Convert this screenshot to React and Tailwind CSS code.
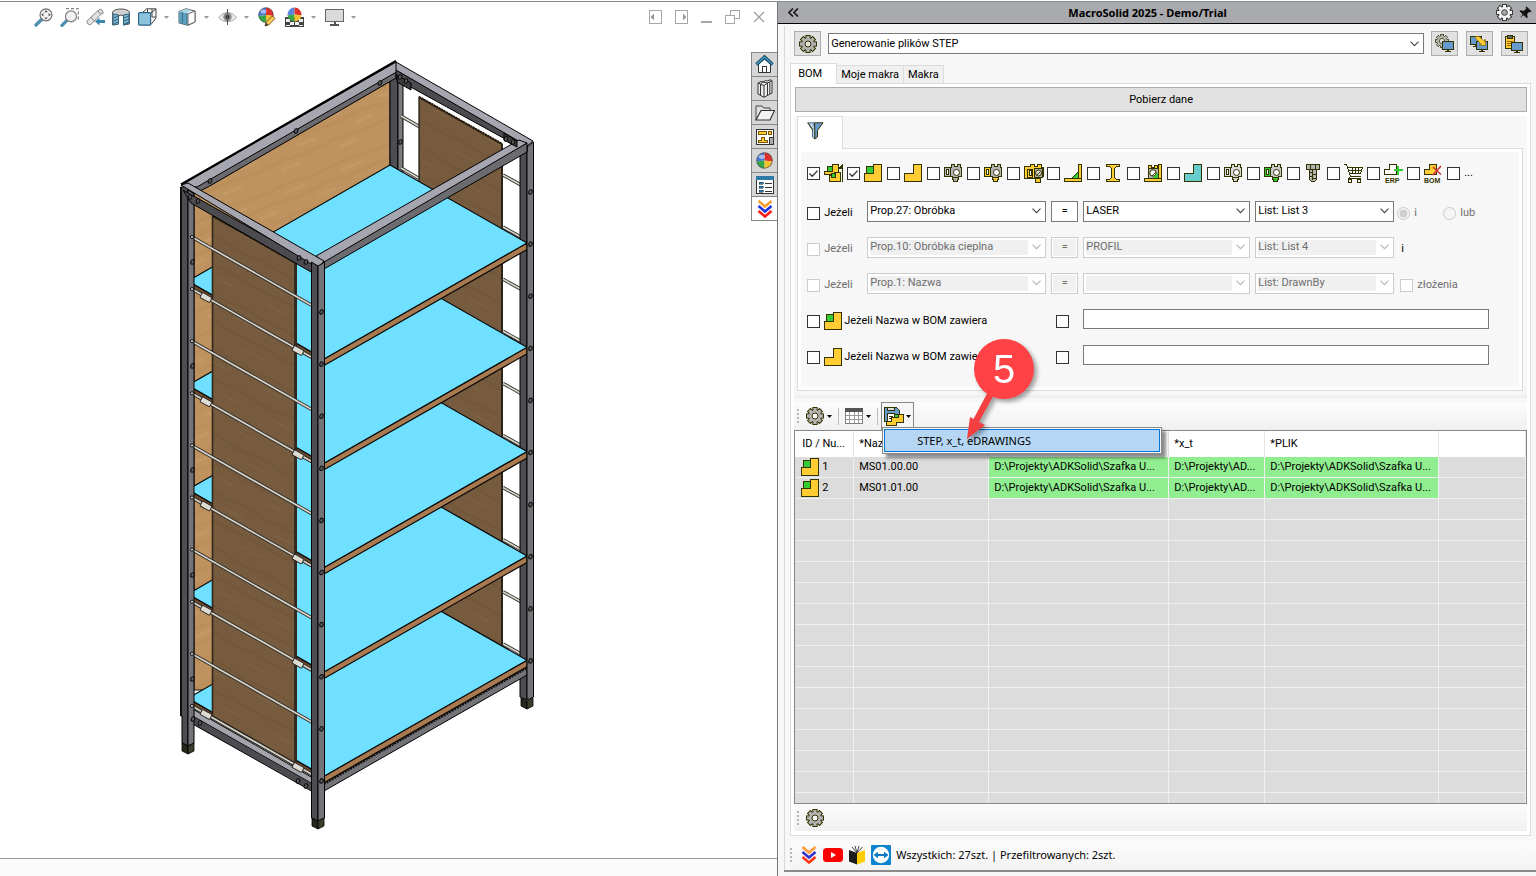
import React, { useState } from 'react';

const INK = '#333300';
const YELLOW = '#ffcc33';
const CYAN = '#6fe0ff';

/* ---------- small shared icons ---------- */

const GEAR_ANGLES = [0, 45, 90, 135, 180, 225, 270, 315];

const GearIcon = ({ size = 18, fill = '#b3b3b3', stroke = INK, hole = '#f7f7f7' }) => (
    <svg width={size} height={size} viewBox="0 0 18 18" className="shrink-0">
        {GEAR_ANGLES.map((a) => (
            <rect key={a} x="6.4" y="0" width="5.2" height="5" fill={stroke} transform={`rotate(${a} 9 9)`} />
        ))}
        <circle cx="9" cy="9" r="6.9" fill={stroke} />
        {GEAR_ANGLES.map((a) => (
            <rect key={a} x="7.4" y="1" width="3.2" height="5" fill={fill} transform={`rotate(${a} 9 9)`} />
        ))}
        <circle cx="9" cy="9" r="6" fill={fill} />
        <circle cx="9" cy="9" r="3" fill={hole} stroke={stroke} />
    </svg>
);

const Icon = ({ w = 18, h = 18, crisp = true, children }) => (
    <svg
        width={w}
        height={h}
        viewBox={`0 0 ${w} ${h}`}
        className="shrink-0"
        fill="none"
        shapeRendering={crisp ? 'crispEdges' : 'auto'}
    >
        {children}
    </svg>
);

const PartIcon = () => (
    <Icon>
        <path d="M9.5 .5H17.5V17.5H.5V9.5H9.5Z" fill={YELLOW} stroke={INK} />
        <rect x="2.5" y="2.5" width="7" height="7" fill="#33cc33" stroke={INK} />
    </Icon>
);

const SheetIcon = ({ fill = YELLOW }) => (
    <Icon>
        <path d="M9.5 .5H17.5V17.5H.5V9.5H9.5Z" fill={fill} stroke={INK} />
    </Icon>
);

const AssemblyIcon = () => (
    <Icon w={20}>
        <path d="M8.5 .5H14.5V10.5H.5V7.5H3.5V3.5H8.5Z" fill={YELLOW} stroke={INK} />
        <path d="M10.5 8.5H16.5V17.5H5.5V11.5H10.5Z" fill={YELLOW} stroke={INK} />
        <rect x="3.5" y="2.5" width="5" height="5" fill="#33cc33" stroke={INK} />
        <rect x="7.5" y="9.5" width="4" height="4" fill="#33cc33" stroke={INK} />
        <path d="M18.5 0V18M17.5 1V5M16.5 2V5M15.5 3V5" stroke={INK} />
    </Icon>
);

const HolderIcon = ({ body = '#b3b3b3', side, foot }) => (
    <Icon>
        <path d="M5.5 3.5H7.5V.5H10.5V2.5H13.5V.5H16.5V3.5H17.5V12.5H14.5V13.5H8.5V12.5H5.5Z" fill={body} stroke={INK} />
        <rect x=".5" y="3.5" width="6" height="9" fill={side || body} stroke={INK} />
        <rect x="2.5" y="5.5" width="2" height="5" fill="#fff" stroke={INK} />
        <path d="M8.5 13.5H14.5V15.5H13.5V17.5H9.5V15.5H8.5Z" fill={foot || body} stroke={INK} />
        <circle cx="12.5" cy="8.5" r="3" fill="#fff" stroke={INK} shapeRendering="auto" />
    </Icon>
);

const MultiHolderIcon = () => (
    <Icon w={20} h={19}>
        <path d="M.5 2.5H6.5V.5H10.5V2.5H13.5V.5H17.5V3.5H19.5V12.5H16.5V14.5H.5Z" fill={YELLOW} stroke={INK} />
        <rect x="3.5" y="5.5" width="5" height="8" fill={YELLOW} stroke={INK} />
        <path d="M10.5 4.5H18.5V13.5H10.5Z" fill="#b3b3b3" stroke={INK} />
        <rect x="5.5" y="6.5" width="2" height="5" fill="#fff" stroke={INK} />
        <path d="M11.5 14.5H16.5V18.5H11.5Z" fill={YELLOW} stroke={INK} />
        <circle cx="14.5" cy="9" r="3" fill="#ddd" stroke={INK} shapeRendering="auto" />
        <path d="M13 11L16 8" stroke={INK} />
    </Icon>
);

const WeldIcon = () => (
    <Icon>
        <path d="M7.5 14.5L14.5 7.5V14.5Z" fill="#33cc33" stroke={INK} />
        <rect x="14.5" y=".5" width="3" height="14" fill={YELLOW} stroke={INK} />
        <rect x=".5" y="14.5" width="17" height="3" fill={YELLOW} stroke={INK} />
    </Icon>
);

const BeamIcon = () => (
    <Icon>
        <path d="M2.5 .5H15.5V2.5H12.5L10.5 4.5V13.5L12.5 15.5H15.5V17.5H2.5V15.5H5.5L7.5 13.5V4.5L5.5 2.5H2.5Z" fill={YELLOW} stroke={INK} />
    </Icon>
);

const WeldmentIcon = () => (
    <Icon>
        <rect x=".5" y="14.5" width="17" height="3" fill={YELLOW} stroke={INK} />
        <rect x="14.5" y=".5" width="3" height="14" fill={YELLOW} stroke={INK} />
        <path d="M4.5 1.5H7.5V3.5H10.5V1.5H13.5V4.5H4.5Z" fill={YELLOW} stroke={INK} />
        <rect x="4.5" y="4.5" width="10" height="10" fill="#b3b3b3" stroke={INK} />
        <circle cx="9" cy="9" r="3.2" fill="#fff" stroke={INK} shapeRendering="auto" />
        <path d="M8.5 14L14 8.5V14Z" fill="#33cc33" />
        <path d="M8 12L12 8" stroke={INK} />
    </Icon>
);

const BoltIcon = () => (
    <Icon>
        <path d="M5.5 5.5H12.5V15.5L10.5 17.5H7.5L5.5 15.5Z" fill="#b3b3b3" stroke={INK} />
        <rect x="2.5" y=".5" width="13" height="5" fill="#b3b3b3" stroke={INK} />
        <path d="M6.5 1V5M11.5 1V5M8.5 6V16M6 8.5H9M9 10.5H12M6 12.5H9M9 14.5H12" stroke={INK} />
    </Icon>
);

const CartIcon = () => (
    <Icon w={19} h={19}>
        <path d="M0 .5H2.5L6.5 12.5H16.5M3.5 3.5H18.5L16.5 9.5H5.5M4.5 6.5H17.5M8.5 3.5V9.5M11.5 3.5V9.5M14.5 3.5V9.5M6.5 12.5L4.5 14.5H16.5" stroke={INK} />
        <rect x="4.5" y="15.5" width="3" height="3" fill="#fff" stroke={INK} />
        <rect x="13.5" y="15.5" width="3" height="3" fill="#fff" stroke={INK} />
    </Icon>
);

const ErpIcon = () => (
    <Icon w={20} h={19}>
        <path d="M5.5 .5H12.5V10.5H.5V5.5H5.5Z" fill="#fff" stroke={INK} />
        <path d="M14 2V11M9.5 6H19" stroke="#33cc33" strokeWidth="2" />
        <text x="1" y="19" fontSize="7" fontWeight="700" fontFamily="Liberation Sans, sans-serif" fill={INK} shapeRendering="auto">ERP</text>
    </Icon>
);

const BomIcon = () => (
    <Icon w={20} h={19}>
        <path d="M5.5 .5H12.5V10.5H.5V5.5H5.5Z" fill={YELLOW} stroke={INK} />
        <path d="M9 3L17 10.5M17 2L9 11" stroke="#cc3333" strokeWidth="1.6" shapeRendering="auto" />
        <text x="0" y="19" fontSize="7" fontWeight="700" fontFamily="Liberation Sans, sans-serif" fill={INK} shapeRendering="auto">BOM</text>
    </Icon>
);

const Monitor = ({ x, y }) => (
    <g transform={`translate(${x} ${y})`}>
        <path d="M6 9V11M3 10.5H9" stroke={INK} strokeWidth="1.4" />
        <rect x=".5" y=".5" width="11" height="8" fill="#6699cc" stroke={INK} />
    </g>
);

const GearMonitorIcon = () => (
    <Icon w={19} h={19}>
        <g transform="scale(.78)" shapeRendering="auto">
            {GEAR_ANGLES.map((a) => (
                <rect key={a} x="7.2" y=".5" width="3.6" height="4" fill="#b3b3b3" stroke={INK} transform={`rotate(${a} 9 9)`} />
            ))}
            <circle cx="9" cy="9" r="5.2" fill="#e1e1e1" stroke="#b3b3b3" strokeWidth="2.4" />
            <circle cx="9" cy="9" r="3.4" stroke={INK} />
        </g>
        <Monitor x={7} y={7} />
    </Icon>
);

const MonitorsIcon = () => (
    <Icon w={19} h={18}>
        <Monitor x={0} y={1} />
        <Monitor x={6} y={6} />
        <g shapeRendering="auto">
            <path d="M5 1.5H9L14.5 6.5V4.5H15.5V10.5H9.5V9.500H11.5L6.500 4.500Z" fill={YELLOW} stroke="#806000" strokeWidth=".6" />
        </g>
    </Icon>
);

const ClipMonitorIcon = () => (
    <Icon w={19} h={18}>
        <rect x=".5" y="1.5" width="9" height="12" fill={YELLOW} stroke={INK} />
        <rect x="2.5" y=".5" width="5" height="3" fill="#666" stroke={INK} />
        <path d="M2 6.5H8M2 8.5H8M2 10.5H8" stroke="#996600" />
        <Monitor x={6} y={7} />
    </Icon>
);

const FilterIcon = () => (
    <Icon w={17} h={18} crisp={false}>
        <path d="M.8.8H6.5L8 8V17L5.5 15V8Z" fill="#b9d3ea" stroke="#4d6b88" />
        <path d="M7.5.8H16L10.5 8.5V15L7.8 17V8.5Z" fill="#6699cc" stroke={INK} />
        <path d="M.8.8L6 8" stroke={INK} />
    </Icon>
);

const GridIcon = () => (
    <Icon w={18} h={16}>
        <rect x=".5" y=".5" width="17" height="15" fill="#fff" stroke="#808080" />
        <rect x="0" y="0" width="18" height="4" fill="#555" />
        <path d="M4.5 4V15M9.5 4V15M13.5 4V15M1 7.5H17M1 11.5H17" stroke="#999" />
    </Icon>
);

const SaveStepIcon = () => (
    <Icon w={20} h={19}>
        <path d="M.5 .5H12.5L15.5 3.5V14.5H.5Z" fill="#6699cc" stroke={INK} />
        <rect x="3.5" y=".5" width="7" height="3" fill="#ddd" stroke={INK} />
        <rect x="3.5" y="6.5" width="7" height="8" fill="#fff" stroke={INK} />
        <path d="M5 9.5H9M5 11.5H9" stroke={INK} />
        <path d="M14.5 7.5H19.5V15.5H12.5V18.5H2.5V14.5H7.5V10.5H14.5Z" fill={YELLOW} stroke={INK} />
        <rect x="10.5" y="7.5" width="4" height="3" fill="#33cc33" stroke={INK} />
    </Icon>
);

const Chevrons = ({ colors = ['#f9a02c', '#2233dd', '#ff1a1a'] }) => (
    <svg width="16" height="18" viewBox="0 0 16 18" fill="none" strokeWidth="2.6" className="shrink-0">
        <path d="M1.5 1L8 6.5L14.5 1" stroke={colors[0]} />
        <path d="M1.5 6L8 11.5L14.5 6" stroke={colors[1]} />
        <path d="M1.5 11L8 16.5L14.5 11" stroke={colors[2]} />
    </svg>
);

const Caret = ({ color = '#000' }) => (
    <svg width="5" height="3" viewBox="0 0 5 3" className="shrink-0">
        <path d="M0 0H5L2.5 3Z" fill={color} />
    </svg>
);

const BallIcon = ({ size = 16 }) => (
    <svg width={size} height={size} viewBox="0 0 16 16" className="shrink-0">
        <path d="M8 8V.5A7.5 7.5 0 0 0 .6 9Z" fill="#4a78d8" />
        <path d="M8 8V.5A7.5 7.5 0 0 1 15.4 9Z" fill="#e0302c" />
        <path d="M8 8L.6 9A7.5 7.5 0 0 0 8 15.5Z" fill="#35a845" />
        <path d="M8 8L15.4 9A7.5 7.5 0 0 1 8 15.5Z" fill="#f2c230" />
        <circle cx="8" cy="8" r="7.3" fill="none" stroke="#444" strokeOpacity=".6" />
        <ellipse cx="5.5" cy="4.5" rx="3" ry="2" fill="#fff" opacity=".5" />
    </svg>
);

/* ---------- graphics area toolbar ---------- */

const ZoomFitIcon = () => (
    <Icon w={19} h={19} crisp={false}>
        <path d="M2 17L8 11" stroke="#4f8fb0" strokeWidth="3.4" strokeLinecap="round" />
        <circle cx="12" cy="6.8" r="6" fill="#f4f4f4" stroke="#707070" strokeWidth="1.2" />
        <path d="M12 2L13.8 4.2H10.2ZM12 11.6L13.8 9.4H10.2ZM7.2 6.8L9.4 5V8.6ZM16.8 6.8L14.6 5V8.6Z" fill="#555" />
    </Icon>
);

const ZoomAreaIcon = () => (
    <Icon w={19} h={19} crisp={false}>
        <path d="M6 .7H18.3V13" stroke="#666" strokeDasharray="3 2" />
        <path d="M2 17.4L7 12.4" stroke="#4f8fb0" strokeWidth="3.4" strokeLinecap="round" />
        <circle cx="11" cy="8.4" r="5.5" fill="#f1f1f1" stroke="#808080" strokeWidth="1.2" />
    </Icon>
);

const PrevViewIcon = () => (
    <Icon w={19} h={18} crisp={false}>
        <path d="M1 13L12 2.5L15 1L17.5 5L14.5 6.5L5 16.5C2.5 17 .5 15.5 1 13Z" fill="#e2e2e2" stroke="#888" />
        <path d="M5 9L8.5 13.5M12 2.8L14.8 6.5" stroke="#888" />
        <path d="M9 13.5L13.5 9.5V12H19V15H13.5V17.5Z" fill="#3f86ad" />
    </Icon>
);

const SectionIcon = () => (
    <Icon w={18} h={18} crisp={false}>
        <path d="M.6 4C2 0 16 0 17.4 4V16L11.5 17V8L9 7L6.5 8V16L.6 17Z" fill="#cfcfcf" stroke="#555" />
        <path d="M1 6L6.5 7V16L1 17ZM11.5 7L17 6V15L11.5 17Z" fill="#7db8d4" stroke="#33627c" />
        <path d="M1.5 10L6 8M1.5 13L6 11M1.5 16L6 14M12 10L17 8M12 13L17 11M12 16L17 14" stroke="#33627c" />
    </Icon>
);

const OrientationIcon = () => (
    <Icon w={19} h={18} crisp={false}>
        <path d="M4.5 4.5L8.5 .8H18V10L13 16.5" fill="#fafafa" stroke="#444" />
        <path d="M9.5 1V5M14 1V9H18M13 5L18 1" stroke="#444" />
        <rect x=".6" y="4.6" width="12" height="12.6" rx="1" fill="#8cc3dc" stroke="#2f6484" strokeWidth="1.2" />
    </Icon>
);

const DisplayStyleIcon = () => (
    <Icon w={18} h={18} crisp={false}>
        <path d="M1 3.5L8 .7L17 3V14L10 17.3L1 15Z" fill="#e7f0f4" stroke="#555" />
        <path d="M1 3.5L9 5V17L1 15Z" fill="#5d9fbe" />
        <path d="M1 3.5L8 .7L13 2L9 5Z" fill="#a9d3e4" />
        <path d="M10 6V17L17 14V3Z" fill="#fff" stroke="#666" />
        <path d="M9 5V17M4.500 4V16" stroke="#33627c" strokeWidth=".8" />
    </Icon>
);

const EyeIcon = () => (
    <Icon w={19} h={16} crisp={false}>
        <path d="M.5 8.5C5 2 14 2 18.5 8.5C14 14 5 14 .5 8.5Z" fill="#e9e9e9" stroke="#aaa" />
        <circle cx="9.5" cy="8" r="4.2" fill="#8a8a8a" />
        <circle cx="9.5" cy="8" r="2" fill="#333" />
        <path d="M9.5 0V16" stroke="#555" />
    </Icon>
);

const AppearanceIcon = () => (
    <div className="relative size-5">
        <BallIcon />
        <svg width="12" height="12" viewBox="0 0 12 12" className="absolute right-0 bottom-0">
            <path d="M1 11L2 7.5L8.5 1L11 3.5L4.5 10Z" fill="#ffd55c" stroke="#7a4a10" />
            <path d="M1 11L2 7.5L4.5 10Z" fill="#444" />
        </svg>
    </div>
);

const SceneIcon = () => (
    <svg width="19" height="20" viewBox="0 0 19 20" className="shrink-0">
        <rect x="0" y="10" width="19" height="10" fill="#444" />
        <path d="M1 12H5V15H1ZM14 12H18V15H14ZM5 15H9V18H5ZM10 15H14V18H10ZM1 18H5V19H1ZM14 18H18V19H14Z" fill="#eee" />
        <svg x="2" y="0" width="15" height="15" viewBox="0 0 16 16">
            <path d="M8 8V.5A7.5 7.5 0 0 0 .6 9Z" fill="#5a86e0" />
            <path d="M8 8V.5A7.5 7.5 0 0 1 15.4 9Z" fill="#e0302c" />
            <path d="M8 8L.6 9A7.5 7.5 0 0 0 8 15.5Z" fill="#35a845" />
            <path d="M8 8L15.4 9A7.5 7.5 0 0 1 8 15.5Z" fill="#f2c230" />
        </svg>
    </svg>
);

const DisplayIcon = () => (
    <Icon w={19} h={17}>
        <rect x=".5" y=".5" width="18" height="12" fill="#dadada" stroke="#666" />
        <path d="M9.5 13V16M5 16H14" stroke="#555" strokeWidth="2" />
    </Icon>
);

const ViewButton = ({ label, caret, children }) => (
    <button type="button" aria-label={label} className="flex h-5 items-center gap-2">
        <span className="flex w-[18px] justify-center">{children}</span>
        {caret && <Caret color="#999" />}
    </button>
);

const ViewportToolbar = () => (
    <div className="flex h-[30px] items-center pr-3 pl-[34px]">
        <div className="flex items-center gap-2">
            <ViewButton label="Zoom to fit"><ZoomFitIcon /></ViewButton>
            <ViewButton label="Zoom to area"><ZoomAreaIcon /></ViewButton>
            <ViewButton label="Previous view"><PrevViewIcon /></ViewButton>
            <ViewButton label="Section view"><SectionIcon /></ViewButton>
            <div className="flex items-center gap-[9px]">
                <ViewButton label="View orientation" caret><OrientationIcon /></ViewButton>
                <ViewButton label="Display style" caret><DisplayStyleIcon /></ViewButton>
                <ViewButton label="Hide or show items" caret><EyeIcon /></ViewButton>
                <ViewButton label="Edit appearance"><AppearanceIcon /></ViewButton>
                <ViewButton label="Apply scene" caret><SceneIcon /></ViewButton>
                <ViewButton label="View settings" caret><DisplayIcon /></ViewButton>
            </div>
        </div>
        <div className="ml-auto flex items-center gap-[13px]">
            <button type="button" aria-label="Collapse left">
                <Icon w={13} h={14}><rect x=".5" y=".5" width="12" height="13" stroke="#a6a6a6" /><path d="M1 7L5 4V10Z" fill="#999" /></Icon>
            </button>
            <button type="button" aria-label="Collapse right">
                <Icon w={13} h={14}><rect x=".5" y=".5" width="12" height="13" stroke="#a6a6a6" /><path d="M12 7L8 4V10Z" fill="#999" /></Icon>
            </button>
            <button type="button" aria-label="Minimize">
                <Icon w={11} h={14}><path d="M0 12H11" stroke="#a6a6a6" strokeWidth="2" /></Icon>
            </button>
            <button type="button" aria-label="Restore">
                <Icon w={15} h={14}><path d="M5.5 5V.5H14.5V8.5H10" stroke="#a6a6a6" /><rect x=".5" y="5.5" width="9" height="8" stroke="#a6a6a6" /></Icon>
            </button>
            <button type="button" aria-label="Close">
                <Icon w={12} h={14} crisp={false}><path d="M1 2L11 12M11 2L1 12" stroke="#a0a0a0" strokeWidth="1.4" /></Icon>
            </button>
        </div>
    </div>
);

/* ---------- task pane tabs ---------- */

const HomeIcon = () => (
    <Icon w={19} h={19} crisp={false}>
        <path d="M3.5 9V17.5H15.5V9L9.5 4Z" fill="#fff" stroke="#333" />
        <rect x="7.5" y="11.5" width="4" height="6" fill="#fff" stroke="#333" />
        <path d="M1.5 9.5L9.5 2L17.5 9.5" stroke="#123c52" strokeWidth="3.4" />
        <path d="M1.5 9.5L9.5 2L17.5 9.5" stroke="#3f9cc9" strokeWidth="1.6" />
    </Icon>
);

const LibraryIcon = () => (
    <Icon w={16} h={19} crisp={false}>
        <path d="M1 4L4 2.500L6 3L8.500 1.500L10.500 2L13 .8L15 1.500V14L7 18.300L1 15Z" fill="#ececec" stroke="#333" />
        <path d="M1 4L3.500 5V16.300M3.500 5L6 3M4 5.500L7 6.500V18M7 6.500L10.500 4V16M6 3L10.500 4L15 1.500M12.800 3V15" stroke="#333" />
    </Icon>
);

const FolderIcon = () => (
    <Icon w={20} h={17} crisp={false}>
        <path d="M1 16V2H7L8.5 4H15V7" fill="#e2e2e2" stroke="#444" />
        <path d="M1 16L6 6.5H19.5L15 16Z" fill="#f3f3f3" stroke="#333" strokeWidth="1.2" />
    </Icon>
);

const PaletteIcon = () => (
    <Icon w={18} h={16}>
        <rect x=".5" y=".5" width="17" height="15" fill="#fff" stroke="#333" />
        <path d="M2.5 2.5H10.5V5.5H2.5ZM12.5 2.5H15.5V5.5H12.5ZM5.5 8.5H8.5V11.5H11.5V13.5H2.5V11.5H5.5Z" fill={YELLOW} stroke="#7a5200" />
        <path d="M13 8H17V15H13Z" fill="#aaa" stroke="#333" />
    </Icon>
);

const PropsIcon = () => (
    <Icon w={18} h={18}>
        <rect x=".5" y=".5" width="17" height="17" fill="#fff" stroke="#333" />
        <rect x="0" y="0" width="18" height="4" fill="#2d7ba6" />
        <path d="M3 6H7V8H3ZM3 10H7V12H3ZM3 14H7V16H3Z" fill="#2d7ba6" stroke="#1d3f55" strokeWidth=".6" />
        <path d="M9 7.5H16M9 11.5H16M9 15.5H16" stroke="#333" />
    </Icon>
);

const paneTabs = [
    { label: 'Home', icon: <HomeIcon /> },
    { label: 'Design library', icon: <LibraryIcon /> },
    { label: 'File explorer', icon: <FolderIcon /> },
    { label: 'View palette', icon: <PaletteIcon /> },
    { label: 'Appearances', icon: <BallIcon size={17} /> },
    { label: 'Custom properties', icon: <PropsIcon /> },
    { label: 'MacroSolid', icon: <Chevrons />, active: true },
];

const PaneTabs = () => (
    <nav className="mt-5 flex w-[26px] shrink-0 flex-col self-start border-t border-l border-[#888]">
        {paneTabs.map((tab) => (
            <button
                key={tab.label}
                type="button"
                aria-label={tab.label}
                className={`flex h-6 items-center justify-center border-b border-[#888] ${tab.active ? 'bg-white' : 'bg-[#d6d6d6]'}`}
            >
                {tab.icon}
            </button>
        ))}
    </nav>
);

/* ---------- 3D model ---------- */

const SHELF_STEP = 104.3;
const shelves = [4, 3, 2, 1, 0];
const rods = [0, 1, 2, 3, 4, 5, 6, 7, 8, 9];

const Rod = ({ x1, y1, x2, y2 }) => (
    <g>
        <line x1={x1} y1={y1} x2={x2} y2={y2} stroke="#2b2b28" strokeWidth="3.4" />
        <line x1={x1} y1={y1} x2={x2} y2={y2} stroke="#d9d5cb" strokeWidth="1.7" />
    </g>
);

const Coupler = ({ x, y }) => (
    <g transform={`translate(${x} ${y}) rotate(29)`}>
        <rect x="-5.5" y="-2.8" width="11" height="5.6" rx="1" fill="#dedbd2" stroke="#222" strokeWidth=".9" />
    </g>
);

const Bolt = ({ x, y }) => <ellipse cx={x} cy={y} rx="1.7" ry="2.3" fill="#5b5b5e" stroke="#0c0c0c" transform={`rotate(20 ${x} ${y})`} />;

const Foot = ({ x, y }) => (
    <g stroke="#000" strokeWidth=".8">
        <path d={`M${x - 6} ${y}L${x} ${y + 3}V${y + 11}L${x - 6} ${y + 8}Z`} fill="#26281c" />
        <path d={`M${x + 6} ${y}L${x} ${y + 3}V${y + 11}L${x + 6} ${y + 8}Z`} fill="#3a3d2c" />
    </g>
);

const Model = () => (
    <svg viewBox="176 58 362 774" className="h-[774px] w-[362px]" role="img" aria-label="Szafka" strokeLinejoin="round">
        <defs>
            <pattern id="woodLight" width="62" height="54" patternUnits="userSpaceOnUse" patternTransform="rotate(-22)">
                <rect width="62" height="54" fill="#bf935f" />
                <path d="M0 8C18 5 34 12 62 8M0 22C20 27 40 18 62 22M0 39C18 36 40 43 62 39" stroke="#bb8e5a" strokeWidth="3" fill="none" />
                <path d="M4 15H26M34 30H54M10 47H30" stroke="#c49965" strokeWidth="3" />
            </pattern>
            <pattern id="woodDark" width="58" height="50" patternUnits="userSpaceOnUse" patternTransform="rotate(28)">
                <rect width="58" height="50" fill="#765b3e" />
                <path d="M0 9C18 6 34 12 58 9M0 34C20 38 40 30 58 34" stroke="#72573b" strokeWidth="2.4" fill="none" />
                <path d="M6 20H28M30 44H52" stroke="#7b6043" strokeWidth="2" />
            </pattern>
        </defs>

        {/* back board and back post */}
        <path d="M193 194L389 81V690H193Z" fill="url(#woodLight)" stroke="#111" strokeWidth="1" />
        <path d="M389 76H397V172H389Z" fill="#4d4d52" stroke="#000" />
        <path d="M397 76H402V175H397Z" fill="#7b7b80" stroke="#000" />
        <Rod x1={400} y1={116} x2={418} y2={126.5} />
        <Rod x1={400} y1={168} x2={418} y2={178.5} />
        <Bolt x={399.5} y={142} />

        {/* right side board */}
        <path d="M418 97L501 144V646L418 600Z" fill="url(#woodDark)" stroke="#111" strokeWidth="1.2" />
        <path d="M418 97L501 144" stroke="#2a1c0c" strokeWidth="2.4" strokeDasharray="2 .8" />
        <path d="M501 144V646" stroke="#2c2216" strokeWidth="2" />
        {rods.map((i) => (
            <Rod key={i} x1={502} y1={175 + i * 52.1} x2={520} y2={185 + i * 52.1} />
        ))}
        <path d="M519 150L526 147V700L519 697Z" fill="#4d4d52" stroke="#000" />

        {/* lower rails */}
        <path d="M323 783L526 667V675L323 791Z" fill="#737378" stroke="#000" />

        {shelves.map((i) => (
            <g key={i} transform={`translate(0 ${i * SHELF_STEP})`} stroke="#0a0a0a" strokeWidth="1.2">
                <path d="M323 359L526 243V249.5L323 365.5Z" fill="#a9794f" />
                <path d="M187 281L323 359V365.5L187 287.5Z" fill="#6b4a2e" />
                <path d="M389 165L526 243L323 359L187 281Z" fill={CYAN} />
            </g>
        ))}
        <path d="M323 784L526 668" stroke="#111" strokeWidth="2" strokeDasharray="2 1" />

        <path d="M190 708L312 778V791L190 723Z" fill="#a3a3ac" stroke="#000" />
        <path d="M190 715L312 784V792L190 723Z" fill="#4b4b50" stroke="#000" strokeWidth=".8" />

        {/* left side board */}
        <path d="M211.5 216L294 262V763L211.5 716Z" fill="url(#woodDark)" stroke="#111" strokeWidth="1.2" />
        <path d="M212 216L295 263" stroke="#2a1c0c" strokeWidth="2.4" strokeDasharray="2 .8" />
        <path d="M295 263V763" stroke="#32281c" strokeWidth="2" />
        <path d="M211.5 216V716" stroke="#32281c" strokeWidth="1.4" />
        {rods.map((i) => (
            <g key={i}>
                <Rod x1={190} y1={236.5 + i * 52.1} x2={312} y2={306 + i * 52.1} />
                {i % 2 === 1 && <Coupler x={205} y={245.5 + i * 52.1} />}
                {i % 2 === 1 && <Coupler x={297} y={298.5 + i * 52.1} />}
            </g>
        ))}

        {/* left post */}
        <path d="M179.5 187H187V746L181 743V716H179.5Z" fill="#4d4d52" stroke="#000" />
        <path d="M187 190L193 194V743L187 746Z" fill="#737378" stroke="#000" />
        <path d="M180 187V716" stroke="#111" strokeWidth="2" />
        {[262, 366, 470, 575, 679].map((y) => (
            <Bolt key={y} x={191.5} y={y} />
        ))}
        {rods.map((i) => (
            <circle key={i} cx="191" cy={237 + i * 52.1} r="1.6" fill="#ccc" stroke="#111" />
        ))}

        {/* right post, outer face */}
        <path d="M526 147L532.5 142V697L526 700Z" fill="#737378" stroke="#000" />
        {rods.map((i) => (
            <Bolt key={i} x={529.5} y={192 + i * 52.1} />
        ))}

        {/* top frame */}
        <path d="M184 186L395 64V78L207 187L193 194Z" fill="#69696e" stroke="#000" />
        <path d="M180 185L395 62L399 70L196 187Z" fill="#a6a6b0" stroke="#000" />
        <path d="M180 184.5L395 61" stroke="#000" strokeWidth="2.2" />
        <path d="M395 70L526 145V151L395 79Z" fill="#4b4b50" stroke="#000" />
        <path d="M395 62L532 141L526 146L395 70Z" fill="#a6a6b0" stroke="#000" />
        <path d="M317 262L526 143V152L323 269L317 270Z" fill="#6b6b70" stroke="#000" />
        <path d="M315 256L518 140L526 143L323 262Z" fill="#a6a6b0" stroke="#000" />
        <path d="M182 190L317 266V276L190 203Z" fill="#4b4b50" stroke="#000" />
        <path d="M180 185L187 183L323 261L317 268Z" fill="#a6a6b0" stroke="#000" />
        <path d="M396 75L410 83V90L396 82ZM503 133L516 141V147L503 140Z" fill="#3b3b3a" stroke="#000" />
        {[[399, 77], [405, 81], [505, 139], [512, 142], [189, 197], [197, 201], [298, 258], [305, 262], [295, 131], [379, 83], [209, 181], [192, 719], [199, 723], [297, 781], [305, 786]].map(([x, y]) => (
            <Bolt key={`${x}-${y}`} x={x} y={y} />
        ))}

        {/* front post */}
        <path d="M310.5 262L317 266V821L310.5 818Z" fill="#4d4d52" stroke="#000" />
        <path d="M317 266L323.5 262V818L317 821Z" fill="#737378" stroke="#000" />
        {rods.map((i) => (
            <Bolt key={i} x={320.5} y={312 + i * 52.1} />
        ))}
        <Foot x={187} y={743} />
        <Foot x={317} y={818} />
        <Foot x={526} y={698} />
    </svg>
);

/* ---------- form controls ---------- */

const CheckBox = ({ id, label, defaultChecked, disabled }) => (
    <span className="relative block size-[13px] shrink-0">
        <input
            id={id}
            type="checkbox"
            aria-label={label}
            defaultChecked={defaultChecked}
            disabled={disabled}
            className="peer block size-[13px] appearance-none border border-[#333] bg-white disabled:border-[#ccc]"
        />
        <svg viewBox="0 0 13 13" className="pointer-events-none absolute inset-0 hidden peer-checked:block">
            <path d="M2.5 6.5L5.2 9.3L10.6 3.6" fill="none" stroke="#333" strokeWidth="1.3" />
        </svg>
    </span>
);

const Select = ({ label, value, options = [], disabled, className = '' }) => (
    <span className={`relative block h-[21px] border bg-white ${disabled ? 'border-[#ccc]' : 'border-[#7a7a7a]'} ${className}`}>
        <select
            aria-label={label}
            defaultValue={value}
            disabled={disabled}
            className={`block h-full w-full appearance-none bg-clip-content p-0.5 leading-[14px] outline-none ${disabled ? 'bg-[#f0f0f0] text-[#6d6d6d] opacity-100' : 'text-black'}`}
        >
            <option>{value}</option>
            {options.map((o) => (
                <option key={o}>{o}</option>
            ))}
        </select>
        <span className="pointer-events-none absolute inset-y-0 right-0 flex w-[17px] items-center justify-center bg-white">
            <svg width="9" height="6" viewBox="0 0 9 6" fill="none">
                <path d="M.5 .7L4.5 4.7L8.5 .7" stroke={disabled ? '#b5b5b5' : '#444'} strokeWidth="1.1" />
            </svg>
        </span>
    </span>
);

const SquareButton = ({ label, children }) => (
    <button type="button" aria-label={label} className="flex h-[25px] w-[27px] shrink-0 items-center justify-center border border-[#adadad] bg-[#e1e1e1]">
        {children}
    </button>
);

const Grip = () => (
    <span className="flex w-0.5 flex-col gap-0.5">
        <i className="size-0.5 bg-[#b5b5b5]" />
        <i className="size-0.5 bg-[#b5b5b5]" />
        <i className="size-0.5 bg-[#b5b5b5]" />
        <i className="size-0.5 bg-[#b5b5b5]" />
    </span>
);

/* ---------- filter ---------- */

const typeFilters = [
    { name: 'Złożenia', icon: <AssemblyIcon />, checked: true },
    { name: 'Części', icon: <PartIcon />, checked: true },
    { name: 'Arkusze', icon: <SheetIcon /> },
    { name: 'Uchwyty', icon: <HolderIcon /> },
    { name: 'Uchwyty z arkuszem', icon: <HolderIcon side={YELLOW} foot={YELLOW} /> },
    { name: 'Uchwyty wielokrotne', icon: <MultiHolderIcon /> },
    { name: 'Spoiny', icon: <WeldIcon /> },
    { name: 'Profile', icon: <BeamIcon /> },
    { name: 'Spawane', icon: <WeldmentIcon /> },
    { name: 'Blachy', icon: <SheetIcon fill="#66cccc" /> },
    { name: 'Importowane', icon: <HolderIcon body="#d9d9d9" /> },
    { name: 'Importowane części', icon: <HolderIcon body="#c9c9c9" side="#33cc33" foot="#33cc33" /> },
    { name: 'Normalia', icon: <BoltIcon /> },
    { name: 'Zakupowe', icon: <CartIcon /> },
    { name: 'Dodaj do ERP', icon: <ErpIcon /> },
    { name: 'Usuń z BOM', icon: <BomIcon /> },
    { name: 'Inne', icon: <span>...</span> },
];

const ROW = 'grid h-9 grid-cols-[55px_179px_27px_167px_1fr] items-center gap-x-[5px]';

const ConditionRow = ({ id, prop, value, list, disabled, children }) => (
    <div className={ROW}>
        <label htmlFor={id} className={`flex items-center gap-1 pt-1 ${disabled ? 'text-[#6d6d6d]' : 'text-black'}`}>
            <CheckBox id={id} disabled={disabled} />
            Jeżeli
        </label>
        <Select label="Właściwość" value={prop} disabled={disabled} />
        <button
            type="button"
            disabled={disabled}
            className={`h-[21px] border text-center leading-[14px] ${disabled ? 'border-[#ccc] bg-[#f0f0f0] text-[#6d6d6d] ring-1 ring-white ring-inset' : 'border-[#7a7a7a] bg-white'}`}
        >
            =
        </button>
        <Select label="Wartość" value={value} disabled={disabled} />
        <div className="flex items-center gap-[3px]">
            <Select label="Lista" value={list} disabled={disabled} className="w-[139px] shrink-0" />
            {children}
        </div>
    </div>
);

const NameRow = ({ id, icon }) => (
    <div className={ROW}>
        <div className="col-span-2 flex items-center pt-1">
            <CheckBox id={id} />
            <label htmlFor={id} className="ml-1 flex items-center gap-0.5 whitespace-nowrap">
                {icon}
                Jeżeli Nazwa w BOM zawiera
            </label>
        </div>
        <div className="pt-1 pl-[5px]">
            <CheckBox label="Włącz filtr nazwy" />
        </div>
        <input type="text" aria-label="Nazwa w BOM" className="col-span-2 h-5 w-full border border-[#7a7a7a] bg-white px-1 outline-none" />
    </div>
);

const FilterPanel = () => (
    <section className="mr-1 ml-[3px]">
        <div className="relative z-10 -mb-px flex h-[33px] w-[46px] items-start border border-b-0 border-[#dcdcdc] bg-white pt-[5px] pl-[9px]">
            <button type="button" aria-label="Filtr"><FilterIcon /></button>
        </div>
        <div className="border border-[#dcdcdc] bg-white p-[3px]">
            <div className="bg-[#f7f7f7] pt-[3px] pr-[30px] pb-3.5 pl-1.5">
                <div className="mb-0.5 flex h-9 items-center">
                    {typeFilters.map((f) => (
                        <label key={f.name} className="flex w-10 shrink-0 items-center gap-1">
                            <CheckBox label={f.name} defaultChecked={f.checked} />
                            {f.icon}
                        </label>
                    ))}
                </div>
                <ConditionRow id="cond-1" prop="Prop.27: Obróbka" value="LASER" list="List: List 3">
                    <label className="flex w-[43px] items-center gap-1 pt-1 text-[#6d6d6d]">
                        <input type="radio" name="join" disabled defaultChecked className="size-[13px]" />i
                    </label>
                    <label className="flex items-center gap-1 pt-1 text-[#6d6d6d]">
                        <input type="radio" name="join" disabled className="size-[13px]" />lub
                    </label>
                </ConditionRow>
                <ConditionRow id="cond-2" prop="Prop.10: Obróbka cieplna" value="PROFIL" list="List: List 4" disabled>
                    <span className="pt-1 pl-1">i</span>
                </ConditionRow>
                <ConditionRow id="cond-3" prop="Prop.1: Nazwa" value="" list="List: DrawnBy" disabled>
                    <label className="flex items-center gap-1 pt-1 pl-[3px] text-[#6d6d6d]">
                        <CheckBox disabled />
                        złożenia
                    </label>
                </ConditionRow>
                <NameRow id="name-asm" icon={<PartIcon />} />
                <NameRow id="name-part" icon={<SheetIcon />} />
            </div>
        </div>
    </section>
);

/* ---------- export toolbar and table ---------- */

const Callout = () => (
    <svg width="76" height="108" viewBox="0 0 76 108" className="pointer-events-none absolute -top-16 left-[166px] z-30 overflow-visible drop-shadow-[3px_3px_2px_rgba(0,0,0,0.35)]">
        <path d="M30 50L13.5 81L10 79L7 101L25 87L19 84L36 53Z" fill="#f43f41" />
        <circle cx="44" cy="31" r="30" fill="#ff4245" />
        <text x="44" y="45" textAnchor="middle" fontSize="40" fontFamily="Liberation Sans, sans-serif" fill="#fff">5</text>
    </svg>
);

const ExportToolbar = () => (
    <div className="relative flex h-7 items-center bg-gradient-to-b from-[#fcfcfc] to-[#f0f0f0] pl-[3px]">
        <Grip />
        <button type="button" aria-label="Ustawienia" className="ml-[7px] flex items-center gap-[3px]">
            <GearIcon /><Caret />
        </button>
        <span className="ml-[6px] h-[17px] w-px bg-[#bdbdbd]" />
        <button type="button" aria-label="Kolumny" className="ml-[6px] flex items-center gap-[3px]">
            <GridIcon /><Caret />
        </button>
        <span className="ml-[6px] h-[17px] w-px bg-[#bdbdbd]" />
        <button type="button" aria-label="Zapisz jako" className="ml-[3px] flex h-7 w-[33px] items-center gap-0.5 border border-b-0 border-[#888] bg-[#f6f6f6] pl-0.5">
            <SaveStepIcon /><Caret />
        </button>
        <div role="menu" className="absolute top-[25px] left-[88px] z-10 w-[280px] border border-[#888] bg-[#f7f7f7] p-px shadow-[4px_4px_3px_rgba(0,0,0,0.45)]">
            <button type="button" role="menuitem" className="block h-[23px] w-full border border-[#0078d7] bg-[#b5d7f3] pl-[32px] text-left font-['Noto_Sans',sans-serif] text-[11px] leading-[20px]">
                STEP, x_t, eDRAWINGS
            </button>
        </div>
        <Callout />
    </div>
);

const headers = ['ID / Nu...', '*Naz', '', '*x_t', '*PLIK', ''];
const rows = [
    { id: '1', name: 'MS01.00.00' },
    { id: '2', name: 'MS01.01.00' },
];
const PATH = 'D:\\Projekty\\ADKSolid\\Szafka U...';
const emptyRows = Array.from({ length: 15 });
const CELL = 'border-r border-b border-[#f0f0f0] p-0 whitespace-nowrap overflow-hidden';

const BomTable = () => (
    <div className="min-h-0 flex-1 overflow-hidden border border-[#828790] bg-[#dcdcdc]">
        <table className="w-full table-fixed border-separate border-spacing-0 text-left">
            <colgroup>
                <col className="w-[59px]" />
                <col className="w-[135px]" />
                <col className="w-[180px]" />
                <col className="w-[96px]" />
                <col className="w-[174px]" />
                <col />
            </colgroup>
            <thead>
                <tr className="h-[26px] bg-white">
                    {headers.map((h, i) => (
                        <th key={i} className="border-r border-[#e5e5e5] p-0 pl-[5px] font-normal whitespace-nowrap first:pl-[7px]">{h}</th>
                    ))}
                </tr>
            </thead>
            <tbody>
                {rows.map((r) => (
                    <tr key={r.id} className="h-[21px]">
                        <td className={`${CELL} pl-1.5`}>
                            <span className="flex h-5 items-center gap-[3px]"><PartIcon />{r.id}</span>
                        </td>
                        <td className={`${CELL} pl-[5px]`}>{r.name}</td>
                        <td className={`${CELL} bg-[#90ee90] pl-[5px]`}>{PATH}</td>
                        <td className={`${CELL} bg-[#90ee90] pl-[5px]`}>D:\Projekty\AD...</td>
                        <td className={`${CELL} bg-[#90ee90] pl-[5px]`}>{PATH}</td>
                        <td className={CELL} />
                    </tr>
                ))}
                {emptyRows.map((_, i) => (
                    <tr key={i} className="h-[21px]">
                        <td className={CELL} /><td className={CELL} /><td className={CELL} />
                        <td className={CELL} /><td className={CELL} /><td className={CELL} />
                    </tr>
                ))}
            </tbody>
        </table>
    </div>
);

/* ---------- bottom bar ---------- */

const StatusBar = () => (
    <footer className="mt-1 flex h-[30px] shrink-0 items-center bg-gradient-to-b from-[#fcfcfc] to-[#f3f3f3]">
        <Grip />
        <div className="ml-[9px] flex items-center gap-1.5">
            <a href="#macrosolid" aria-label="MacroSolid"><Chevrons colors={['#ff9a3c', '#3333cc', '#ff3311']} /></a>
            <a href="#youtube" aria-label="YouTube">
                <svg width="20" height="14" viewBox="0 0 20 14"><rect width="20" height="14" rx="3.5" fill="#f00" /><path d="M8 4L13 7L8 10Z" fill="#fff" /></svg>
            </a>
            <a href="#help" aria-label="Pomoc">
                <svg width="16" height="19" viewBox="0 0 16 19">
                    <path d="M0 4L8 7V18.5L0 15.5Z" fill="#1c1c1c" />
                    <path d="M16 4L8 7V18.5L16 15.5Z" fill="#ffcc00" />
                    <path d="M8 7L3 1M8 7L6 0M8 7L10 0M8 7L13.5 1" stroke="#333" strokeWidth=".9" />
                </svg>
            </a>
            <a href="#teamviewer" aria-label="TeamViewer">
                <svg width="20" height="20" viewBox="0 0 20 20">
                    <rect width="20" height="20" rx="1" fill="#0a84cf" />
                    <circle cx="10" cy="10" r="8.2" fill="#fff" />
                    <path d="M2.5 10L7 6.8V9H13V6.8L17.5 10L13 13.2V11H7V13.2Z" fill="#0a78c2" />
                </svg>
            </a>
        </div>
        <p className="ml-[5px] font-['Noto_Sans',sans-serif] text-[11px]">Wszystkich: 27szt. | Przefiltrowanych: 2szt.</p>
    </footer>
);

const tabs = ['BOM', 'Moje makra', 'Makra'];

const MacroPanel = () => {
    const [tab, setTab] = useState('BOM');

    return (
        <aside className="flex min-w-0 flex-1 flex-col border-l border-[#777] bg-[#f7f7f7]">
            <header className="flex h-[22px] shrink-0 items-center border-b border-black bg-[#a9aaae] pr-1 pl-2.5">
                <button type="button" aria-label="Zwiń panel">
                    <svg width="11" height="9" viewBox="0 0 11 9" fill="none" stroke="#1a1a1a" strokeWidth="1.7"><path d="M5 .5L1 4.5L5 8.5M10 .5L6 4.5L10 8.5" /></svg>
                </button>
                <h1 className="flex-1 text-center font-['Noto_Sans',sans-serif] text-[11px] font-bold">MacroSolid 2025 - Demo/Trial</h1>
                <button type="button" aria-label="Opcje"><GearIcon size={17} fill="#f4f4f4" stroke="#333" hole="#a9aaae" /></button>
                <button type="button" aria-label="Przypnij" className="ml-[5px]">
                    <svg width="14" height="14" viewBox="0 0 14 14"><path d="M8.5 0L14 5.5L12.500 6.500L11.500 6L9.500 8L10 11.500L8.800 12.500L5.500 9.500L.8 13.200L4.300 8.300L1 5L2.200 4L6 4.500L8 2.500L7.500 1.200Z" fill="#111" stroke="#eee" strokeWidth=".4" /></svg>
                </button>
            </header>

            <div className="mt-0.5 ml-1.5 flex min-h-0 flex-1 flex-col border-l border-[#d8d8d8] pl-[5px]">
                <div className="mt-[5px] mb-[7px] flex items-center pr-2 pl-1">
                    <SquareButton label="Ustawienia makra"><GearIcon hole="#e1e1e1" /></SquareButton>
                    <Select label="Makro" value="Generowanie plików STEP" className="ml-[7px] flex-1" />
                    <div className="ml-[7px] flex gap-2">
                        <SquareButton label="Ustawienia ekranu"><GearMonitorIcon /></SquareButton>
                        <SquareButton label="Przenieś"><MonitorsIcon /></SquareButton>
                        <SquareButton label="Wklej"><ClipMonitorIcon /></SquareButton>
                    </div>
                </div>

                <div className="relative z-10 -mb-px flex items-end" role="tablist">
                    {tabs.map((t) => (
                        <button
                            key={t}
                            type="button"
                            role="tab"
                            aria-selected={tab === t}
                            onClick={() => setTab(t)}
                            className={`-mr-px border border-[#dcdcdc] ${tab === t ? 'h-[21px] border-b-0 bg-white pr-3.5 pl-[7px]' : 'h-[19px] bg-[#f0f0f0] px-1'}`}
                        >
                            {t}
                        </button>
                    ))}
                </div>

                <div className="mr-[5px] flex min-h-0 flex-1 flex-col border border-[#dcdcdc] bg-white p-[3px] pb-1">
                    <button type="button" className="mb-1 ml-px h-[25px] shrink-0 border border-[#adadad] bg-[#e1e1e1]">Pobierz dane</button>
                    <div className="flex min-h-0 flex-1 flex-col bg-[#f7f7f7]">
                        <FilterPanel />
                        <div className="mt-1 mb-1 h-[3px] shrink-0 bg-[#f0f0f0]" />
                        <ExportToolbar />
                        <BomTable />
                        <div className="flex h-[27px] shrink-0 items-center bg-gradient-to-b from-[#fcfcfc] to-[#f0f0f0] pl-[3px]">
                            <Grip />
                            <button type="button" aria-label="Opcje tabeli" className="ml-[7px]"><GearIcon /></button>
                        </div>
                    </div>
                </div>
                <StatusBar />
            </div>
            <div className="mb-1 ml-1.5 h-0.5 shrink-0 bg-[#8a8a8a]" />
        </aside>
    );
};

const App = () => (
    <div className="flex h-screen flex-col overflow-hidden bg-white font-[Roboto,sans-serif] text-[11px] leading-[14px] text-black">
        <div className="mt-px h-px shrink-0 bg-[#848c88]" />
        <div className="flex min-h-0 flex-1">
            <main className="flex w-[50.6%] shrink-0 flex-col">
                <ViewportToolbar />
                <div className="flex min-h-0 flex-1 justify-end">
                    <div className="flex flex-1 justify-center pt-[26px] pr-9">
                        <Model />
                    </div>
                    <PaneTabs />
                </div>
                <div className="h-[18px] shrink-0 border-t border-[#999] bg-[#fafafa]" />
            </main>
            <MacroPanel />
        </div>
    </div>
);

export default App;
